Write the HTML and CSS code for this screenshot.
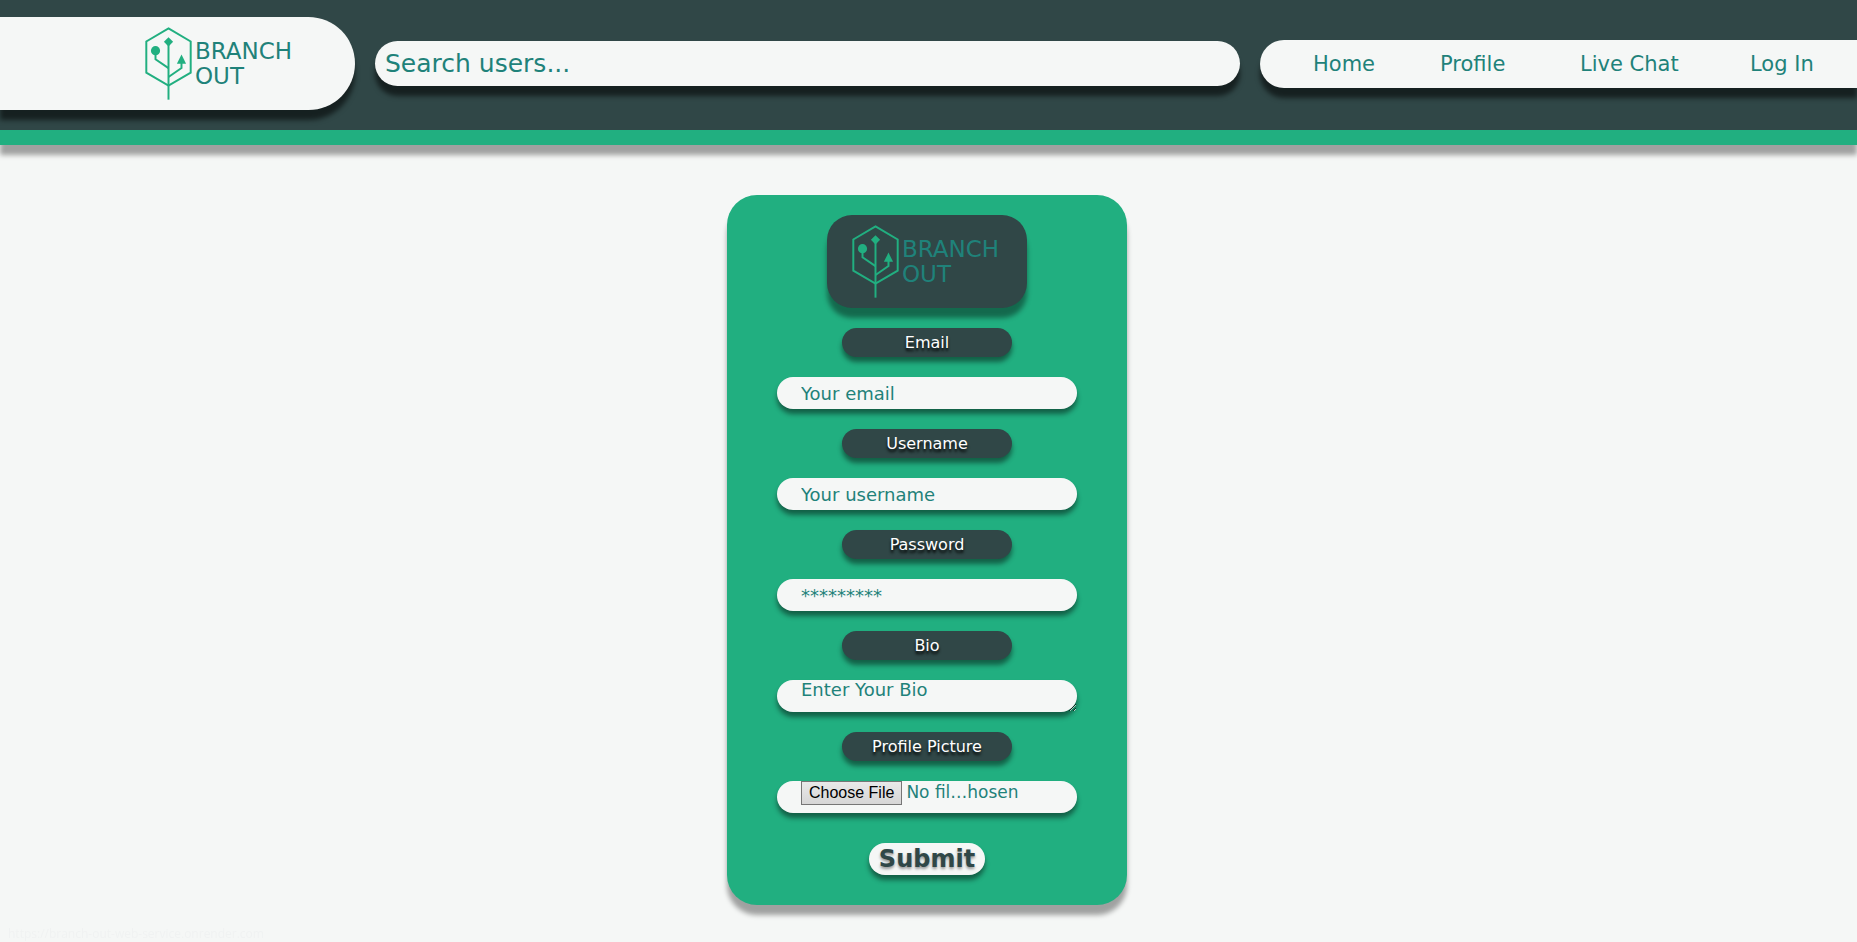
FILE: index.html
```html
<!DOCTYPE html>
<html lang="en">
<head>
<meta charset="utf-8">
<title>Branch Out</title>
<meta name="viewport" content="width=device-width, initial-scale=1">
<link rel="stylesheet" href="styles.css">
</head>
<body>
<svg class="sprite" aria-hidden="true">
  <symbol id="tree" viewBox="0 0 141 222">
    <g fill="none" stroke="currentColor" stroke-width="6">
      <path d="M70.500 4 L138 44 V139 L70.500 178 L3 139 V44 Z"/>
      <path d="M70.500 44 V221"/>
      <path d="M31 72 V98 L70.500 125"/>
      <path d="M110 106 V125 L70.500 152"/>
    </g>
    <g fill="currentColor">
      <circle cx="31" cy="72" r="14"/>
      <path d="M70.500 31 L84.500 45 L70.500 59 L56.500 45 Z"/>
      <path d="M110 84 L124 112 H96 Z"/>
    </g>
  </symbol>
</svg>

<header class="header">
  <a class="brand" href="#">
    <span class="logo">
      <svg class="logo-icon" aria-hidden="true"><use href="#tree"/></svg>
      <span class="logo-text">BRANCH<br>OUT</span>
    </span>
  </a>
  <form class="search-form" role="search">
    <input class="search" type="search" placeholder="Search users..." aria-label="Search users">
  </form>
  <nav class="nav">
    <a class="nav-link" href="#">Home</a>
    <a class="nav-link" href="#">Profile</a>
    <a class="nav-link" href="#">Live Chat</a>
    <a class="nav-link" href="#">Log In</a>
  </nav>
</header>

<main class="main">
  <form class="card">
    <div class="card-logo">
      <span class="logo">
        <svg class="logo-icon" aria-hidden="true"><use href="#tree"/></svg>
        <span class="logo-text">BRANCH<br>OUT</span>
      </span>
    </div>
    <label class="label" for="email">Email</label>
    <input class="field" id="email" type="email" placeholder="Your email">
    <label class="label" for="username">Username</label>
    <input class="field" id="username" type="text" placeholder="Your username">
    <label class="label" for="password">Password</label>
    <input class="field" id="password" type="password" placeholder="*********">
    <label class="label" for="bio">Bio</label>
    <textarea class="field field-bio" id="bio" placeholder="Enter Your Bio"></textarea>
    <label class="label" for="picture">Profile Picture</label>
    <input class="field field-file" id="picture" type="file">
    <button class="submit" type="submit">Submit</button>
  </form>
</main>

<div class="status">https://branch-out-web-service.onrender.com</div>
</body>
</html>
```

FILE: styles.css
```css
:root {
  --dark: #304747;
  --green: #21af80;
  --light: #f5f7f6;
  --teal: #1f827a;
}

* {
  box-sizing: border-box;
}

body {
  margin: 0;
  background: var(--light);
  color: var(--teal);
  font-family: "DejaVu Sans", sans-serif;
}

.sprite {
  position: absolute;
  width: 0;
  height: 0;
}

.header {
  display: grid;
  grid-template-columns: auto 1fr auto;
  gap: 20px;
  align-items: center;
  padding: 17px 0 20px;
  background: var(--dark);
  border-bottom: 15px solid var(--green);
  box-shadow: 0 10px 5px rgba(0, 0, 0, 0.35);
}

.brand {
  padding: 10px 60px 10px 145px;
  background: var(--light);
  border-radius: 0 50px 50px 0;
  box-shadow: 0 10px 5px rgba(0, 0, 0, 0.55);
  color: var(--teal);
  text-decoration: none;
}

.logo {
  display: flex;
  align-items: center;
  gap: 3px;
  width: 150px;
}

.logo-icon {
  flex: none;
  width: 47px;
  height: 73px;
  color: var(--green);
}

.logo-text {
  font-size: 23px;
  line-height: 25px;
}

.search {
  display: block;
  width: 100%;
  height: 45px;
  padding: 0 10px;
  border: 0;
  border-radius: 23px;
  background: var(--light);
  box-shadow: 0 10px 5px rgba(0, 0, 0, 0.55);
  color: var(--teal);
  font-family: inherit;
  font-size: 25px;
  appearance: none;
}

.search::placeholder,
.field::placeholder {
  color: var(--teal);
  opacity: 1;
}

.nav {
  display: grid;
  grid-template-columns: 60px 73px 103px 66px;
  column-gap: 67px;
  align-items: center;
  height: 48px;
  padding: 0 41px 0 53px;
  background: var(--light);
  border-radius: 24px 0 0 24px;
  box-shadow: 0 10px 5px rgba(0, 0, 0, 0.55);
}

.nav-link {
  color: var(--teal);
  font-size: 21px;
  line-height: 24px;
  text-decoration: none;
  white-space: nowrap;
}

.main {
  display: flex;
  justify-content: center;
  padding: 50px 3px 36px 0;
}

.card {
  display: flex;
  flex-direction: column;
  align-items: center;
  gap: 20px;
  width: 400px;
  padding: 20px 20px 30px;
  background: var(--green);
  border-radius: 30px;
  box-shadow: 0 10px 5px rgba(0, 0, 0, 0.35);
}

.card-logo {
  padding: 10px 25px;
  background: var(--dark);
  border-radius: 25px;
  box-shadow: 0 10px 5px rgba(0, 0, 0, 0.4);
}

.label {
  width: 170px;
  border-radius: 15px;
  background: var(--dark);
  box-shadow: 0 5px 5px rgba(0, 0, 0, 0.45);
  color: #fff;
  font-size: 16px;
  line-height: 29px;
  text-align: center;
  text-shadow: 0 3px 3px #000;
}

.field {
  display: block;
  width: 300px;
  height: 32px;
  padding: 0 24px;
  border: 0;
  border-radius: 16px;
  background: var(--light);
  box-shadow: 0 5px 5px rgba(0, 0, 0, 0.45);
  color: var(--teal);
  font-family: inherit;
  font-size: 18px;
}

.field-bio {
  line-height: 20px;
  overflow: hidden;
  resize: both;
}

.field-file {
  padding-right: 56px;
  font-size: 17px;
}

.field-file::file-selector-button {
  height: 24px;
  padding: 0 7px;
  border: 1px solid #767676;
  border-radius: 0;
  background: linear-gradient(#e9e9e9, #d6d6d6);
  color: #000;
  font-family: "Liberation Sans", Arial, sans-serif;
  font-size: 16px;
}

.submit {
  height: 32px;
  margin-top: 10px;
  padding: 0 10px;
  border: 0;
  border-radius: 16px;
  background: var(--light);
  box-shadow: 0 5px 5px rgba(0, 0, 0, 0.45);
  color: var(--dark);
  font-family: inherit;
  font-size: 24px;
  font-weight: bold;
  line-height: 32px;
  text-shadow: 0 2px 3px rgba(0, 0, 0, 0.4);
}

.status {
  position: fixed;
  bottom: 0;
  left: 8px;
  color: #f0f2f2;
  font-family: "Open Sans", sans-serif;
  font-size: 12px;
  line-height: 17px;
}
```
